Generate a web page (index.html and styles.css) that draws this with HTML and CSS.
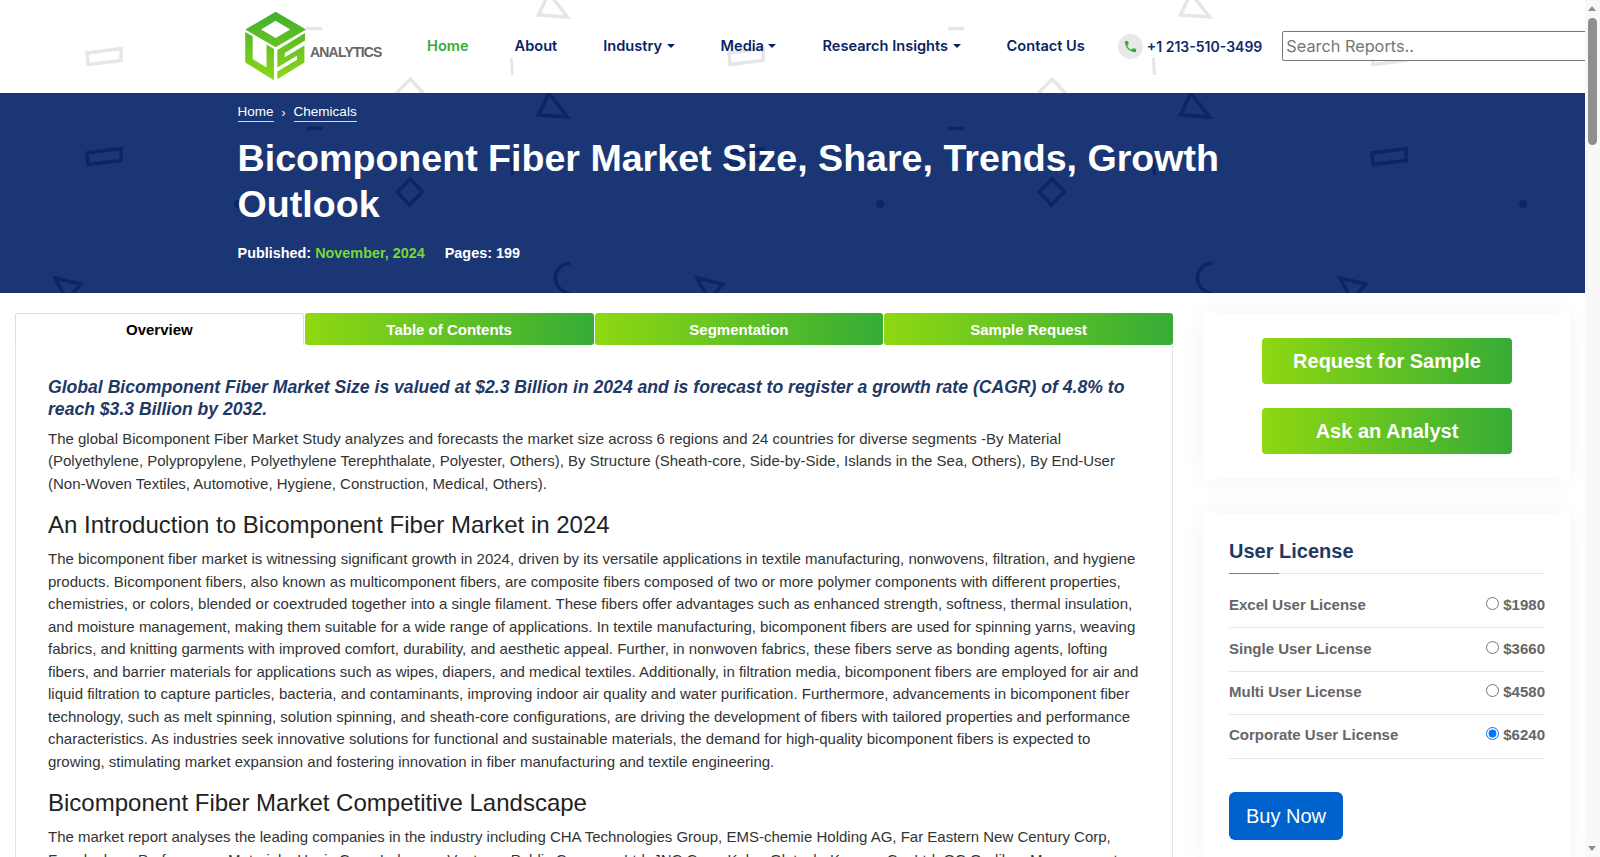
FILE: index.html
```html
<!DOCTYPE html>
<html lang="en">
<head>
    <meta charset="UTF-8">
    <meta name="viewport" content="width=device-width, initial-scale=1.0">
    <title>Bicomponent Fiber Market Size, Share, Trends, Growth Outlook</title>
    <link rel="stylesheet" href="styles.css">
</head>
<body>
    <header class="site-header">
        <a class="logo" href="#">
            <svg class="logo-mark" viewBox="45 30 185 210" aria-hidden="true">
                <defs>
                    <linearGradient id="logoGreen" gradientUnits="userSpaceOnUse" x1="0" y1="35" x2="0" y2="238">
                        <stop offset="0" stop-color="#3fae30"/>
                        <stop offset="1" stop-color="#8ed816"/>
                    </linearGradient>
                </defs>
                <g fill="url(#logoGreen)">
                    <path fill-rule="evenodd" d="M135 35 225 88 135 140 45 88ZM135 62 92 88 135 113 178 88Z"/>
                    <path d="M45 95 67 108V175L108 200V132L130 145V238L45 185Z"/>
                    <path d="M140 148 222 98V120L162 157V170L220 135V185L140 235V212L198 177V165L140 200Z"/>
                </g>
            </svg>
            <span class="logo-text">ANALYTICS</span>
        </a>

        <nav class="main-nav">
            <a class="active" href="#">Home</a>
            <a href="#">About</a>
            <a class="dropdown" href="#">Industry</a>
            <a class="dropdown" href="#">Media</a>
            <a class="dropdown" href="#">Research Insights</a>
            <a href="#">Contact Us</a>
        </nav>

        <a class="phone" href="#">
            <span class="phone-icon">
                <svg viewBox="0 0 24 24" width="15" height="15" aria-hidden="true">
                    <path fill="#36ac37" d="M6.62 10.79c1.44 2.83 3.76 5.14 6.59 6.59l2.2-2.2c.27-.27.67-.36 1.02-.24 1.12.37 2.33.57 3.57.57.55 0 1 .45 1 1V20c0 .55-.45 1-1 1-9.39 0-17-7.61-17-17 0-.55.45-1 1-1h3.5c.55 0 1 .45 1 1 0 1.25.2 2.45.57 3.57.11.35.03.74-.25 1.02l-2.2 2.2z"/>
                </svg>
            </span>
            +1 213-510-3499
        </a>

        <input class="search" type="text" placeholder="Search Reports..">
    </header>

    <section class="hero">
        <div class="breadcrumb">
            <a href="#">Home</a>
            <span class="sep">›</span>
            <a href="#">Chemicals</a>
        </div>
        <h1>Bicomponent Fiber Market Size, Share, Trends, Growth Outlook</h1>
        <div class="meta">
            <span>Published: <em>November, 2024</em></span>
            <span>Pages: 199</span>
        </div>
    </section>

    <main class="page">
        <div class="report">
            <div class="tabs">
                <a class="tab current" href="#">Overview</a>
                <a class="tab" href="#">Table of Contents</a>
                <a class="tab" href="#">Segmentation</a>
                <a class="tab" href="#">Sample Request</a>
            </div>
            <div class="tab-body">
                <p class="lead">Global Bicomponent Fiber Market Size is valued at $2.3 Billion in 2024 and is forecast to register a growth rate (CAGR) of 4.8% to reach $3.3 Billion by 2032.</p>
                <p>The global Bicomponent Fiber Market Study analyzes and forecasts the market size across 6 regions and 24 countries for diverse segments -By Material (Polyethylene, Polypropylene, Polyethylene Terephthalate, Polyester, Others), By Structure (Sheath-core, Side-by-Side, Islands in the Sea, Others), By End-User (Non-Woven Textiles, Automotive, Hygiene, Construction, Medical, Others).</p>
                <h2>An Introduction to Bicomponent Fiber Market in 2024</h2>
                <p>The bicomponent fiber market is witnessing significant growth in 2024, driven by its versatile applications in textile manufacturing, nonwovens, filtration, and hygiene products. Bicomponent fibers, also known as multicomponent fibers, are composite fibers composed of two or more polymer components with different properties, chemistries, or colors, blended or coextruded together into a single filament. These fibers offer advantages such as enhanced strength, softness, thermal insulation, and moisture management, making them suitable for a wide range of applications. In textile manufacturing, bicomponent fibers are used for spinning yarns, weaving fabrics, and knitting garments with improved comfort, durability, and aesthetic appeal. Further, in nonwoven fabrics, these fibers serve as bonding agents, lofting fibers, and barrier materials for applications such as wipes, diapers, and medical textiles. Additionally, in filtration media, bicomponent fibers are employed for air and liquid filtration to capture particles, bacteria, and contaminants, improving indoor air quality and water purification. Furthermore, advancements in bicomponent fiber technology, such as melt spinning, solution spinning, and sheath-core configurations, are driving the development of fibers with tailored properties and performance characteristics. As industries seek innovative solutions for functional and sustainable materials, the demand for high-quality bicomponent fibers is expected to growing, stimulating market expansion and fostering innovation in fiber manufacturing and textile engineering.</p>
                <h2>Bicomponent Fiber Market Competitive Landscape</h2>
                <p>The market report analyses the leading companies in the industry including CHA Technologies Group, EMS-chemie Holding AG, Far Eastern New Century Corp, Freudenberg Performance Materials, Huvis Corp, Indorama Ventures Public Company Ltd, JNC Corp, Kolon Glotech, Kuraray Co. Ltd, OC Oerlikon Management AG.</p>
            </div>
        </div>

        <aside class="sidebar">
            <div class="card card-actions">
                <a class="btn-green" href="#">Request for Sample</a>
                <a class="btn-green" href="#">Ask an Analyst</a>
            </div>
            <div class="card card-license">
                <h3>User License</h3>
                <label class="license-row"><span>Excel User License</span><span class="price"><input type="radio" name="license"> $1980</span></label>
                <label class="license-row"><span>Single User License</span><span class="price"><input type="radio" name="license"> $3660</span></label>
                <label class="license-row"><span>Multi User License</span><span class="price"><input type="radio" name="license"> $4580</span></label>
                <label class="license-row"><span>Corporate User License</span><span class="price"><input type="radio" name="license" checked> $6240</span></label>
                <button class="btn-buy">Buy Now</button>
            </div>
        </aside>
    </main>

    <div class="scrollbar">
        <span class="arrow-up"></span>
        <span class="thumb"></span>
        <span class="arrow-down"></span>
    </div>
</body>
</html>
```

FILE: styles.css
```css
:root {
    --shapes: url("data:image/svg+xml,%3Csvg xmlns='http://www.w3.org/2000/svg' width='642.5' height='300' fill='none' stroke='black' stroke-width='3.5'%3E%3Cpath d='M87 53 121 48.5V60.5L88 64.5Z'/%3E%3Cpath d='M548.5-7 538 15 567 17Z'/%3E%3Cpath d='M548.5 293 538 315 567 317Z'/%3E%3Cpath d='M306 28.5H322'/%3E%3Cpath d='M511 58 512 75' stroke-width='3'/%3E%3Cpath d='M410 79 422 92 409 105 397 92Z'/%3E%3Ccircle cx='238' cy='104' r='4' fill='black' stroke='none'/%3E%3Cpath d='M570 163C550 165 550 190 570 194'/%3E%3Cpath d='M55 178 81 184 67 200Z'/%3E%3C/svg%3E");
}

html {
    overflow: hidden;
}

body {
    margin: 0 15px 0 0;
    font-family: "Liberation Sans", Arial, sans-serif;
    color: #333;
    background-color: #fff;
}

a {
    text-decoration: none;
}

.site-header {
    position: relative;
    display: flex;
    align-items: center;
    height: 93px;
    padding-left: 245px;
    overflow: hidden;
}

.site-header::before,
.hero::before {
    content: "";
    position: absolute;
    inset: 0;
    -webkit-mask-image: var(--shapes);
    mask-image: var(--shapes);
    -webkit-mask-size: 642.5px 300px;
    mask-size: 642.5px 300px;
}

.site-header::before {
    background-color: #e6e6e6;
}

.logo {
    position: relative;
    display: flex;
    align-items: center;
    flex-shrink: 0;
    width: 137px;
    margin-top: -2px;
}

.logo-mark {
    width: 63px;
    height: 71px;
    margin-right: 2px;
}

.logo-text {
    margin-top: 12px;
    font-size: 14px;
    font-weight: bold;
    letter-spacing: -0.8px;
    color: #666;
}

.main-nav {
    position: relative;
    display: flex;
    margin-left: 22px;
    margin-bottom: 2px;
    flex-shrink: 0;
}

.main-nav a {
    padding: 0 23px;
    font-family: Inter, "Liberation Sans", sans-serif;
    font-size: 14.6px;
    font-weight: 600;
    color: #0b1f66;
    white-space: nowrap;
}

.main-nav a.active {
    color: #36ac37;
}

.main-nav a.dropdown::after {
    content: "";
    display: inline-block;
    margin-left: 4.5px;
    vertical-align: 3px;
    border-top: 4px solid;
    border-left: 4px solid transparent;
    border-right: 4px solid transparent;
}

.phone {
    position: relative;
    display: flex;
    align-items: center;
    flex-shrink: 0;
    margin-left: 10px;
    font-family: Inter, "Liberation Sans", sans-serif;
    font-size: 14px;
    font-weight: 600;
    color: #12296b;
    white-space: nowrap;
}

.phone-icon {
    display: flex;
    align-items: center;
    justify-content: center;
    width: 25px;
    height: 25px;
    margin-right: 4px;
    border-radius: 50%;
    background-color: #e8e8e8;
}

.search {
    position: relative;
    flex-shrink: 0;
    width: 340px;
    height: 30px;
    margin-left: 20px;
    margin-bottom: 2px;
    padding: 0 3px;
    box-sizing: border-box;
    border: 1px solid #767676;
    border-radius: 2px;
    background: #fff;
    font-family: Inter, "Liberation Sans", sans-serif;
    font-size: 16.3px;
}

.hero {
    position: relative;
    box-sizing: border-box;
    height: 200px;
    padding: 11px 340px 0 237.6px;
    background-color: #1b3675;
    color: #fff;
    overflow: hidden;
}

.hero::before {
    background-color: #0c2564;
    -webkit-mask-position: 0 7px;
    mask-position: 0 7px;
}

.hero > * {
    position: relative;
}

.breadcrumb {
    display: flex;
    align-items: center;
    font-size: 13.5px;
}

.breadcrumb a {
    padding-bottom: 2px;
    border-bottom: 1px solid #d8d8d8;
    color: #fff;
}

.breadcrumb .sep {
    margin: 0 8px;
    font-size: 12px;
}

.hero h1 {
    margin: 13px 0 0;
    font-size: 37.6px;
    line-height: 46px;
}

.meta {
    display: flex;
    gap: 20px;
    margin-top: 18px;
    font-size: 14.4px;
    font-weight: bold;
}

.meta em {
    font-style: normal;
    color: #77d933;
}

.page {
    display: flex;
    align-items: flex-start;
    padding: 20px 0 0 15px;
}

.report {
    flex-shrink: 0;
    width: 1158px;
    box-sizing: border-box;
}

.tabs {
    display: grid;
    grid-template-columns: repeat(4, 1fr);
    gap: 1px;
}

.tab {
    height: 32px;
    line-height: 33px;
    text-align: center;
    font-size: 15px;
    font-weight: bold;
    color: #fff;
    border-radius: 3px;
    background: linear-gradient(90deg, #8fd811, #36ac37);
}

.tab.current {
    box-sizing: border-box;
    line-height: 31px;
    border: 1px solid #dedede;
    border-bottom: none;
    border-radius: 3px 3px 0 0;
    background: #fff;
    color: #000;
}

.tab-body {
    padding: 31px 32px 32px;
    border: 1px solid #e4e4e4;
    border-top: none;
}

.tab-body p {
    margin: 0 0 8px;
    font-size: 15px;
    line-height: 22.5px;
}

.tab-body p.lead {
    margin-bottom: 7.9px;
    font-size: 17.6px;
    line-height: 22px;
    font-style: italic;
    font-weight: bold;
    color: #1f3864;
}

.tab-body h2 {
    margin: 15px 0 8px;
    font-size: 24px;
    font-weight: normal;
    line-height: 30px;
    color: #222;
}

.sidebar {
    flex-shrink: 0;
    width: 366px;
    margin-left: 31px;
}

.card {
    box-sizing: border-box;
    margin-bottom: 34px;
    background-color: #fff;
    box-shadow: 0 0 24px rgba(0, 0, 0, 0.05);
}

.card-actions {
    display: flex;
    flex-direction: column;
    align-items: center;
    gap: 24px;
    padding: 25px 0;
}

.btn-green {
    display: block;
    width: 250px;
    height: 46px;
    line-height: 46px;
    text-align: center;
    font-size: 20px;
    font-weight: bold;
    color: #fff;
    border-radius: 4px;
    background: linear-gradient(90deg, #8fd811, #36ac37);
}

.card-license {
    padding: 25px;
}

.card-license h3 {
    position: relative;
    margin: 0 0 11px;
    padding-bottom: 9px;
    font-size: 20px;
    line-height: 26px;
    color: #1f3864;
    border-bottom: 1px solid #e6e6e6;
}

.card-license h3::after {
    content: "";
    position: absolute;
    left: 0;
    bottom: -1px;
    width: 50px;
    height: 1px;
    background-color: #36ac37;
}

.license-row {
    display: flex;
    justify-content: space-between;
    align-items: center;
    height: 43.4px;
    padding-bottom: 3px;
    box-sizing: border-box;
    border-bottom: 1px solid #e6e6e6;
    font-size: 15px;
    font-weight: bold;
    color: #666;
}

.price {
    display: flex;
    align-items: center;
    gap: 4px;
}

.price input {
    margin: 0 0 2px;
}

.btn-buy {
    display: block;
    margin-top: 33.6px;
    width: 114px;
    height: 48px;
    border: none;
    border-radius: 6px;
    background-color: #0062cc;
    color: #fff;
    font-family: "Liberation Sans", Arial, sans-serif;
    font-size: 20px;
}

.scrollbar {
    position: fixed;
    top: 0;
    right: 0;
    bottom: 0;
    width: 15px;
    background-color: #f8f8f8;
}

.thumb {
    position: absolute;
    top: 18px;
    left: 3px;
    width: 9px;
    height: 127px;
    border-radius: 5px;
    background-color: #8f8f8f;
}

.arrow-up,
.arrow-down {
    position: absolute;
    left: 3px;
    border-left: 4.5px solid transparent;
    border-right: 4.5px solid transparent;
}

.arrow-up {
    top: 6px;
    border-bottom: 5px solid #8f8f8f;
}

.arrow-down {
    bottom: 6px;
    border-top: 5px solid #8f8f8f;
}
```
